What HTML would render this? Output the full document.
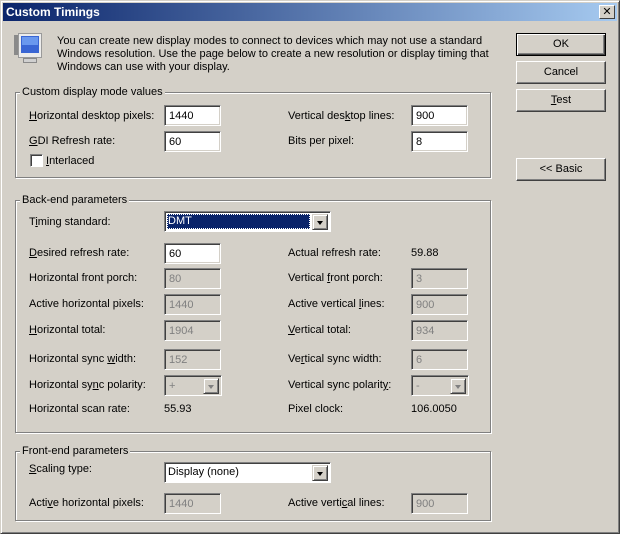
<!DOCTYPE html>
<html><head><meta charset="utf-8"><style>
*{margin:0;padding:0;box-sizing:border-box}
body{width:620px;height:534px;background:#d4d0c8;font:11px "Liberation Sans",Tahoma,sans-serif;color:#000;position:relative;overflow:hidden}
.win{position:absolute;left:0;top:0;width:620px;height:534px;border:1px solid;border-color:#d4d0c8 #404040 #404040 #d4d0c8;box-shadow:inset 1px 1px 0 #fff,inset -1px -1px 0 #808080}
.title{position:absolute;left:3px;top:3px;width:614px;height:18px;background:linear-gradient(to right,#0a246a,#a6caf0);color:#fff;font-weight:bold;font-size:12px;padding:2px 0 0 3px}
.x{position:absolute;right:5px;top:5px;width:16px;height:14px;background:#d4d0c8;border:1px solid;border-color:#fff #404040 #404040 #fff;font:bold 11px "DejaVu Sans",sans-serif;text-align:center;line-height:11px;color:#000}
.a{position:absolute;white-space:nowrap;line-height:13px;transform:translateY(1px)}
.g{position:absolute;border:1px solid #808080;box-shadow:1px 1px 0 #fff,inset 1px 1px 0 #fff}
.gl{position:absolute;background:#d4d0c8;padding:0 2px;line-height:13px;white-space:nowrap}
.in{position:absolute;width:57px;height:21px;background:#fff;border:1px solid;border-color:#808080 #fff #fff #808080;box-shadow:inset 1px 1px 0 #404040,inset -1px -1px 0 #d4d0c8;padding:4px 0 0 4px;line-height:13px}
.d{background:#d4d0c8;color:#808080}
.btn{position:absolute;left:516px;width:90px;height:23px;border:1px solid;border-color:#fff #404040 #404040 #fff;box-shadow:inset -1px -1px 0 #808080;text-align:center;line-height:21px}
.cb{position:absolute;width:167px;height:21px;background:#fff;border:1px solid;border-color:#808080 #fff #fff #808080;box-shadow:inset 1px 1px 0 #404040;padding:3px 0 0 3px;line-height:13px}
.arr{position:absolute;right:2px;top:2px;width:16px;height:16px;background:#d4d0c8;border:1px solid;border-color:#d4d0c8 #404040 #404040 #d4d0c8;box-shadow:inset 1px 1px 0 #fff,inset -1px -1px 0 #808080}
.arr:after{content:"";position:absolute;left:4px;top:6px;border:3.5px solid transparent;border-top:4px solid #000;border-bottom:0}
.arr.dis:after{border-top-color:#808080}
u{text-decoration:underline}
</style></head><body>
<div class="win"></div>
<div class="title">Custom Timings</div>
<div class="x">✕</div>
<svg style="position:absolute;left:13px;top:32px" width="34" height="34" viewBox="0 0 34 34">
<rect x="1" y="3" width="5" height="20" fill="#8a8a8a"/>
<rect x="5.5" y="1.5" width="23" height="24" fill="#ececec" stroke="#9a9a9a"/>
<rect x="8" y="4" width="18" height="17" fill="#3a66d4"/>
<rect x="9" y="5" width="16" height="8" fill="#6a98ee"/>
<rect x="10.5" y="26.5" width="13" height="4" fill="#d0d0d0" stroke="#8a8a8a"/>
</svg>
<div class="a" style="left:57px;top:34px">You can create new display modes to connect to devices which may not use a standard</div>
<div class="a" style="left:57px;top:47px">Windows resolution. Use the page below to create a new resolution or display timing that</div>
<div class="a" style="left:57px;top:60px">Windows can use with your display.</div>

<div class="btn" style="top:33px;border-color:#000;box-shadow:inset 1px 1px 0 #fff,inset -1px -1px 0 #404040,inset -2px -2px 0 #808080">OK</div>
<div class="btn" style="top:61px">Cancel</div>
<div class="btn" style="top:89px"><u>T</u>est</div>
<div class="btn" style="top:158px">&lt;&lt; Basic</div>

<div class="g" style="left:15px;top:92px;width:476px;height:86px"></div>
<div class="gl" style="left:20px;top:86px">Custom display mode values</div>
<div class="a" style="left:29px;top:109px"><u>H</u>orizontal desktop pixels:</div>
<div class="in" style="left:164px;top:105px">1440</div>
<div class="a" style="left:288px;top:109px">Vertical des<u>k</u>top lines:</div>
<div class="in" style="left:411px;top:105px">900</div>
<div class="a" style="left:29px;top:134px"><u>G</u>DI Refresh rate:</div>
<div class="in" style="left:164px;top:131px">60</div>
<div class="a" style="left:288px;top:134px">Bits per pixel:</div>
<div class="in" style="left:411px;top:131px">8</div>
<div style="position:absolute;left:30px;top:154px;width:13px;height:13px;background:#fff;border:1px solid;border-color:#808080 #fff #fff #808080;box-shadow:inset 1px 1px 0 #404040"></div>
<div class="a" style="left:46px;top:154px"><u>I</u>nterlaced</div>

<div class="g" style="left:15px;top:200px;width:476px;height:233px"></div>
<div class="gl" style="left:20px;top:194px">Back-end parameters</div>
<div class="a" style="left:29px;top:215px">T<u>i</u>ming standard:</div>
<div class="cb" style="left:164px;top:211px"><span style="display:inline-block;background:#0a246a;color:#fff;width:143px;height:15px;margin:-1px 0 0 -1px;padding:1px 0 0 1px;outline:1px dotted #fff;outline-offset:-1px">DMT</span><div class="arr"></div></div>
<div class="a" style="left:29px;top:246px"><u>D</u>esired refresh rate:</div>
<div class="in" style="left:164px;top:243px">60</div>
<div class="a" style="left:288px;top:246px">Actual refresh rate:</div>
<div class="a" style="left:411px;top:246px">59.88</div>

<div class="a" style="left:29px;top:271px">Horizontal front porch:</div>
<div class="in d" style="left:164px;top:268px">80</div>
<div class="a" style="left:288px;top:271px">Vertical <u>f</u>ront porch:</div>
<div class="in d" style="left:411px;top:268px">3</div>

<div class="a" style="left:29px;top:297px">Active horizontal pixels:</div>
<div class="in d" style="left:164px;top:294px">1440</div>
<div class="a" style="left:288px;top:297px">Active vertical <u>l</u>ines:</div>
<div class="in d" style="left:411px;top:294px">900</div>

<div class="a" style="left:29px;top:323px"><u>H</u>orizontal total:</div>
<div class="in d" style="left:164px;top:320px">1904</div>
<div class="a" style="left:288px;top:323px"><u>V</u>ertical total:</div>
<div class="in d" style="left:411px;top:320px">934</div>

<div class="a" style="left:29px;top:352px">Horizontal sync <u>w</u>idth:</div>
<div class="in d" style="left:164px;top:349px">152</div>
<div class="a" style="left:288px;top:352px">Ve<u>r</u>tical sync width:</div>
<div class="in d" style="left:411px;top:349px">6</div>

<div class="a" style="left:29px;top:378px">Horizontal sy<u>n</u>c polarity:</div>
<div class="in d" style="left:164px;top:375px;width:58px">+<div class="arr dis"></div></div>
<div class="a" style="left:288px;top:378px">Vertical sync polarit<u>y</u>:</div>
<div class="in d" style="left:411px;top:375px;width:58px">-<div class="arr dis"></div></div>

<div class="a" style="left:29px;top:402px">Horizontal scan rate:</div>
<div class="a" style="left:164px;top:402px">55.93</div>
<div class="a" style="left:288px;top:402px">Pixel clock:</div>
<div class="a" style="left:411px;top:402px">106.0050</div>

<div class="g" style="left:15px;top:451px;width:476px;height:70px"></div>
<div class="gl" style="left:20px;top:445px">Front-end parameters</div>
<div class="a" style="left:29px;top:462px"><u>S</u>caling type:</div>
<div class="cb" style="left:164px;top:462px">Display (none)<div class="arr"></div></div>
<div class="a" style="left:29px;top:496px">Acti<u>v</u>e horizontal pixels:</div>
<div class="in d" style="left:164px;top:493px">1440</div>
<div class="a" style="left:288px;top:496px">Active verti<u>c</u>al lines:</div>
<div class="in d" style="left:411px;top:493px">900</div>
</body></html>
